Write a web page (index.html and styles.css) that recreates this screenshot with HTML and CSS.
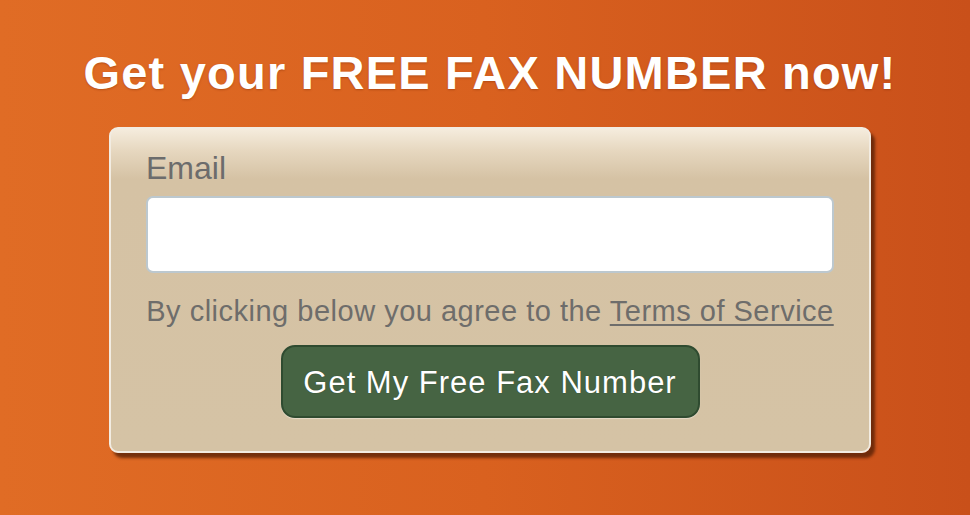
FILE: index.html
```html
<!DOCTYPE html>
<html>
<head>
<meta charset="utf-8">
<link rel="stylesheet" href="styles.css">
</head>
<body>
<div class="page">
  <h1 class="title">Get your FREE FAX NUMBER now!</h1>
  <div class="card">
    <label class="label" for="email">Email</label>
    <input class="input" id="email" type="text">
    <p class="terms">By clicking below you agree to the <a href="#" class="link">Terms of Service</a></p>
    <div class="actions">
      <button class="btn">Get My Free Fax Number</button>
    </div>
  </div>
</div>
</body>
</html>
```
FILE: styles.css
```css
html, body {
  margin: 0;
  padding: 0;
  height: 100%;
}
body {
  background: linear-gradient(90deg, #e06c25 0%, #d9611f 50%, #c9501a 100%);
  font-family: "Liberation Sans", Arial, sans-serif;
  overflow: hidden;
}
.page {
  display: flex;
  flex-direction: column;
  align-items: center;
  padding-top: 47px;
  padding-left: 10px;
}
.title {
  margin: 0;
  color: #fff;
  font-size: 47px;
  letter-spacing: 1.2px;
  font-weight: bold;
  line-height: 52px;
  text-shadow: 0 1px 2px rgba(120, 40, 0, 0.4);
}
.card {
  box-sizing: border-box;
  margin-top: 28px;
  width: 762px;
  height: 326px;
  border: 2px solid #f2ece2;
  border-radius: 9px;
  background: linear-gradient(180deg, #f5ecdd 0px, #e6d7bf 22px, #d5c2a4 50px, #d5c3a5 100%);
  box-shadow: 4px 5px 3px rgba(80, 30, 5, 0.75);
  padding: 21px 35px 0 35px;
  display: flex;
  flex-direction: column;
}
.label {
  color: #6c6c6c;
  font-size: 32px;
  line-height: 37px;
}
.input {
  box-sizing: border-box;
  margin-top: 9px;
  width: 688px;
  height: 77px;
  border: 2px solid #bcc8cf;
  border-radius: 7px;
  background: #fff;
  outline: none;
}
.terms {
  margin: 20px 0 0 0;
  text-align: center;
  color: #6e6d6b;
  font-size: 29px;
  letter-spacing: 0.5px;
  line-height: 36px;
}
.link {
  color: #6e6d6b;
  text-decoration: underline;
  text-underline-offset: 3px;
}
.actions {
  display: flex;
  justify-content: center;
  margin-top: 16px;
}
.btn {
  box-sizing: border-box;
  width: 419px;
  height: 73px;
  background: #466443;
  border: 2px solid #2f4b30;
  border-radius: 14px;
  color: #fff;
  font-family: "Liberation Sans", Arial, sans-serif;
  font-size: 31px;
  letter-spacing: 1px;
  padding: 2px 0 0 0;
  box-shadow: 0 1px 1px rgba(255, 255, 255, 0.4);
  text-shadow: 0 0 1px rgba(0, 0, 0, 0.4);
}
```
